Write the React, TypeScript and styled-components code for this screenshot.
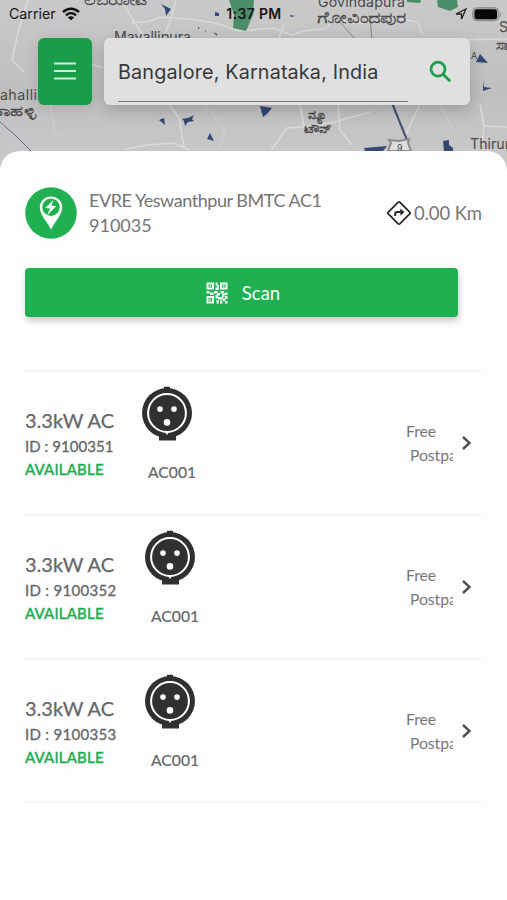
import React from "react";
import styled, { createGlobalStyle } from "styled-components";

const GlobalStyle = createGlobalStyle`
  * { box-sizing: border-box; }
  body { margin: 0; background: #fdfdfd; }
`;

const Screen = styled.main`
  position: relative;
  width: 507px;
  height: 900px;
  overflow: hidden;
  background: #c9c9c9;
  font-family: Lato, "Open Sans", sans-serif;
  color: #666;
`;

const MapCanvas = styled.svg`
  position: absolute;
  inset: 0 0 auto 0;
  display: block;
`;

const Header = styled.header`
  position: relative;
  height: 151px;
`;

const StatusBar = styled.div`
  display: grid;
  grid-template-columns: 1fr auto 1fr;
  align-items: center;
  height: 28px;
  padding: 0 5px 0 9px;
  font-family: Inter, sans-serif;
  font-size: 14.2px;
  line-height: 28px;
  color: #161616;
`;

const StatusGroup = styled.div<{ $end?: boolean }>`
  display: flex;
  align-items: center;
  justify-content: ${(p) => (p.$end ? "flex-end" : "flex-start")};
  gap: ${(p) => (p.$end ? "5px" : "6px")};
`;

const Clock = styled.span`
  margin-right: 3px;
  font-weight: 600;
  font-size: 14px;
  letter-spacing: 0.35px;
`;

const SearchRow = styled.div`
  display: flex;
  gap: 12px;
  padding: 10px 37px 0 38px;
`;

const MenuButton = styled.button`
  display: flex;
  align-items: center;
  justify-content: center;
  width: 54px;
  height: 67px;
  padding: 0;
  border: 0;
  border-radius: 6px;
  background: #189d49;
  box-shadow: 0 3px 14px rgba(0, 0, 0, 0.12);
`;

const SearchBox = styled.div`
  display: flex;
  flex: 1;
  height: 67px;
  padding: 0 18px 0 14px;
  border-radius: 6px;
  background: #e0e0e0;
  box-shadow: 0 5px 16px rgba(0, 0, 0, 0.2);
`;

const SearchField = styled.div`
  width: 290px;
  height: 64px;
  border-bottom: 1px solid #777;
  font-family: Inter, sans-serif;
  font-size: 19.8px;
  line-height: 69px;
  letter-spacing: 0.15px;
  color: #383838;
  white-space: nowrap;
`;

const SearchIcon = styled.svg`
  margin: 22px 0 0 auto;
`;

const Sheet = styled.section`
  position: relative;
  height: 749px;
  padding: 36px 25px 0;
  border-radius: 20px 20px 0 0;
  background: #fdfdfd;
`;

const Station = styled.div`
  display: flex;
  align-items: center;
  height: 52px;
`;

const StationText = styled.div`
  margin-left: 12px;
  font-size: 18px;
  line-height: 25px;
  letter-spacing: -0.45px;
  color: #757575;
  white-space: nowrap;
`;

const StationCode = styled.div`
  letter-spacing: 0;
`;

const Distance = styled.div`
  display: flex;
  align-items: center;
  gap: 2px;
  margin-left: auto;
  font-size: 18.5px;
  letter-spacing: -0.1px;
  white-space: nowrap;
  color: #777;
`;

const ScanButton = styled.button`
  display: flex;
  align-items: center;
  justify-content: center;
  gap: 14px;
  width: 433px;
  height: 49px;
  margin: 29px 0 53px;
  padding: 0 0 0 3px;
  border: 0;
  border-radius: 4px;
  background: #20b052;
  box-shadow: 1px 4px 6px rgba(0, 0, 0, 0.2);
  font-family: inherit;
  font-size: 18.5px;
  color: #f4fff7;
`;

const ConnectorList = styled.ul`
  margin: 0;
  padding: 0;
  list-style: none;
  border-top: 2px solid #f4f4f4;
`;

const Connector = styled.li`
  display: flex;
  height: 144px;
  border-bottom: 2px solid #f4f4f4;

  &:last-child {
    height: 143px;
    border-bottom-color: #f7f7f7;
  }
`;

const Details = styled.div<{ $wide?: boolean }>`
  width: ${(p) => (p.$wide ? 120 : 117)}px;
  padding-top: 34px;
  white-space: nowrap;
`;

const Power = styled.div`
  font-size: 20px;
  line-height: 28px;
  -webkit-text-stroke: 0.25px;
`;

const Identifier = styled.div<{ $wide?: boolean }>`
  font-size: 15px;
  line-height: 25px;
  letter-spacing: ${(p) => (p.$wide ? 0.3 : 0.05)}px;
  -webkit-text-stroke: 0.3px;
`;

const Availability = styled.div`
  font-size: 15px;
  line-height: 20px;
  letter-spacing: 0.2px;
  color: #16ac4b;
  -webkit-text-stroke: 0.4px;
`;

const Plug = styled.div`
  display: flex;
  flex-direction: column;
  width: 60px;
  padding-top: 14px;
`;

const PlugName = styled.div`
  margin: 20px 0 0 6px;
  font-size: 15.7px;
  line-height: 20px;
  -webkit-text-stroke: 0.2px;
`;

const Billing = styled.div`
  width: 47px;
  margin-left: auto;
  padding-top: 47px;
  overflow: hidden;
  font-size: 15.8px;
  line-height: 24px;
  letter-spacing: -0.1px;
  color: #777;
  white-space: nowrap;
`;

const Plan = styled.div`
  padding-left: 4px;
`;

const Chevron = styled.svg`
  margin: 61px 8px 0 7px;
`;

function CityMap() {
  return (
    <MapCanvas width="507" height="180" viewBox="0 0 507 180">
      <defs>
        <linearGradient id="land" x1="0" y1="0" x2="0" y2="1">
          <stop offset="0" stopColor="#c9c9c9" />
          <stop offset="0.5" stopColor="#bfbfbf" />
          <stop offset="1" stopColor="#cbcbcb" />
        </linearGradient>
      </defs>
      <rect width="507" height="180" fill="url(#land)" />
      <g fill="none" stroke="#d9d9d9" strokeWidth="1.6">
        <path d="M28 0 18 32 12 60 24 72M92 65 103 67M121 0 138 28 146 40" />
        <path d="M132 23 150 21 160 17 190 19 215 23 240 31 273 28 292 35 304 31 324 29 335 20 360 24 390 18 418 22 423 35" />
        <path d="M176 0 171 18 163 40M279 38 284 24M168 103 179 118 184 147M125 149 148 145 173 143 190 150M300 104 304 127 335 122 370 112M338 104 340 130 352 145M420 104 404 138M271 150 287 128 303 127M453 40 507 39M480 104 484 126 507 127M484 126 482 145" />
      </g>
      <g fill="none" stroke="#d0d0d0">
        <path d="M50 105 55 130 70 150M205 105 225 130 218 150M440 105 452 128" />
      </g>
      <g fill="none" stroke="#67708a">
        <path d="m0 122 15 13 17 17" />
        <path d="m338 20 18 20M370 17 372 40" stroke="#858995" />
        <path d="m392 103 15 37" stroke="#42506f" strokeWidth="2" />
      </g>
      <path d="M229 0H254L253 15 246 31 233 28 234 15Z" fill="#4c8d69" />
      <path d="M407 0H421L420 3 407 2ZM437 0H457L458 7 450 11 438 7Z" fill="#4c8d69" />
      <g fill="#344875">
        <path d="m161 4 10 5-5 7-1-7ZM215 12l4 1v3h-4ZM213 32l4 2v2ZM159 120l5-2 1 7ZM182 119l6-1 6-3-2 4 2 2-6 1-3 4-1-5ZM207 139l3-6 4 8ZM260 106l12 2-5 6-4 3ZM476 62l4-8 8 9ZM483 81l1 6 8 1-9 3ZM364 148l23-2-4 5h-18ZM443 141l6-1v5l4 3v3h-9Z" />
        <path d="m198 27 2 1-2 1ZM205 30l1 1-1 1ZM290 15l5 1-4 1Z" />
      </g>
      <path d="M388 151 391 143 389 140 399 141 409 139 408 143 411 151Z" fill="#ddd" stroke="#8b8b8b" strokeWidth="2" />
      <g fontFamily='Inter, "Open Sans", sans-serif' fontSize="14.2" fill="#4a4a4a">
        <text x="84" y="5" textLength="64" lengthAdjust="spacingAndGlyphs" stroke="#4a4a4a" strokeWidth=".3">ಲಿಬರೋಟೆ</text>
        <text x="114" y="42" textLength="77">Mavallipura</text>
        <text x="318" y="7" textLength="87">Govindapura</text>
        <text x="317" y="23" fontSize="15.5" textLength="89" lengthAdjust="spacingAndGlyphs" stroke="#4a4a4a" strokeWidth=".3">ಗೋವಿಂದಪುರ</text>
        <text x="-9" y="100" textLength="46">nahalli</text>
        <text x="-10" y="116" textLength="46" lengthAdjust="spacingAndGlyphs" stroke="#4a4a4a" strokeWidth=".3">ಣಾಹಳ್ಳಿ</text>
        <text x="499" y="32">S</text>
        <text x="496" y="50" fontSize="15" stroke="#4a4a4a" strokeWidth=".3">ಸಾ</text>
        <text x="471" y="59" fontSize="9">A</text>
        <text x="470" y="149">Thirumala</text>
        <g fontSize="12" fontWeight="700">
          <text x="308" y="119" textLength="20" lengthAdjust="spacingAndGlyphs">ನ್ಯೂ</text>
          <text x="304" y="133" textLength="28" lengthAdjust="spacingAndGlyphs">ಟೌನ್</text>
        </g>
        <text x="397" y="151" fontSize="9">9</text>
      </g>
    </MapCanvas>
  );
}

function WifiGlyph() {
  return (
    <svg width="18" height="14" viewBox="0 0 18 14" fill="none" stroke="#101010" strokeWidth="2.5">
      <path d="M1 5.1C5.7.6 12.3.6 17 5.1M4 8.3c3-2.8 7-2.8 10 0" />
      <path d="M9 13.3 5.9 10.4c1.8-1.7 4.4-1.7 6.2 0Z" fill="#101010" stroke="none" />
    </svg>
  );
}

function StationBadge() {
  return (
    <svg width="52" height="52" viewBox="0 0 52 52">
      <circle cx="26" cy="26" r="25.8" fill="#20b052" />
      <path d="M26 42.5C21.5 33.5 14.8 28 14.8 20.2a11.2 10.8 0 0 1 22.4 0C37.2 28 30.5 33.5 26 42.5Z" fill="#f8fff9" />
      <circle cx="26" cy="20.2" r="8.7" fill="#20b052" />
      <path d="m28.5 12.7-8.2 8.2 4.8.7-3 6.7 9-9-4.8-.8Z" fill="#f8fff9" />
    </svg>
  );
}

function DirectionsGlyph() {
  return (
    <svg width="26" height="26" viewBox="0 0 26 26" fill="none" stroke="#292929" strokeWidth="1.8">
      <path d="m12 2.3-9.7 9.8q-1 .9 0 1.8l9.7 9.8q1 .9 2 0l9.7-9.8q1-.9 0-1.8L14 2.3q-1-.9-2 0Z" />
      <path d="M9.2 16v-2.1q0-1.8 1.8-1.8h4.5" strokeWidth="2" />
      <path d="m14.4 8.4 4.1 3.7-4.1 3.7Z" fill="#292929" stroke="none" />
    </svg>
  );
}

function QrGlyph() {
  return (
    <svg width="22" height="22" viewBox="0 0 22 22" fill="#f4fff7">
      <path fillRule="evenodd" d="M.5.5H8v7H.5Zm2 2v3H6v-3ZM14 .5h7.5v7H14Zm2 2v3h3.5v-3ZM.5 14H8v7.5H.5Zm2 2v3.5H6V16Z" />
      <path d="M3.5 3.3H5v1.4H3.5ZM17 3.3h1.4v1.4H17ZM3.5 17H5v1.4H3.5ZM9.5.5h2v3h-2ZM11 3h2v5h-3.5V5.5H11ZM.5 9h3v2.5h-3ZM4 10.5h3.5V13H4ZM8 9h3.5v2.5H8ZM11 11h3v2.5h-3ZM14.5 9H18v2.5h-3.5ZM18.5 10.5h3V13h-3ZM9.5 13H12v3.5H9.5ZM12 15h5v2.5h-5ZM16 12h2.5v3H16ZM19 14h2.5v3H19ZM10.5 18h2.3v3.5h-2.3ZM14 18.5h2.5v3H14ZM17 16.5h2.3V19H17ZM19 19h2.5v2.5H19Z" />
    </svg>
  );
}

function SocketIcon() {
  return (
    <svg width="50" height="56" viewBox="0 0 50 56">
      <path d="M22 4V.8h6V4ZM17 48h17v6.5H17Z" fill="#303030" />
      <circle cx="25" cy="27" r="25" fill="#303030" />
      <circle cx="25" cy="27" r="18.9" fill="#303030" stroke="#fff" strokeWidth="2" />
      <path d="m22.3 45 2.7 4 2.7-4Z" fill="#fff" />
      <g fill="#fff">
        <circle cx="18" cy="23.1" r="2.8" />
        <circle cx="32" cy="23.1" r="2.8" />
        <circle cx="25" cy="36.4" r="3.3" />
      </g>
    </svg>
  );
}

const connectors = [
  { id: "9100351", wide: false },
  { id: "9100352", wide: true },
  { id: "9100353", wide: true },
];

export default function App() {
  return (
    <Screen>
      <GlobalStyle />
      <CityMap />
      <Header>
        <StatusBar>
          <StatusGroup>
            <span>Carrier</span>
            <WifiGlyph />
          </StatusGroup>
          <Clock>1:37 PM</Clock>
          <StatusGroup $end>
            <svg width="12" height="12" viewBox="0 0 12 12" fill="none" stroke="#222" strokeWidth="1.3">
              <path d="M1 6 11 1 6.5 11V6Z" />
            </svg>
            <svg width="30" height="15" viewBox="0 0 30 15">
              <rect x=".7" y=".7" width="26" height="13" rx="4" fill="#aaa" stroke="#888" />
              <rect x="2.5" y="2.3" width="22.5" height="10" rx="2.5" fill="#080808" />
              <path d="M28 5q2 2.5 0 5Z" fill="#888" />
            </svg>
          </StatusGroup>
        </StatusBar>
        <SearchRow>
          <MenuButton aria-label="Menu">
            <svg width="24" height="20" viewBox="0 0 24 20" stroke="#d5edde" strokeWidth="2">
              <path d="M1 1.5h22M1 9h22M1 16.5h22" />
            </svg>
          </MenuButton>
          <SearchBox>
            <SearchField>Bangalore, Karnataka, India</SearchField>
            <SearchIcon width="24" height="24" viewBox="0 0 24 24" fill="none" stroke="#189f49" strokeWidth="2.7">
              <circle cx="10" cy="9.2" r="7" />
              <path d="m15 14.3 7.2 7" />
            </SearchIcon>
          </SearchBox>
        </SearchRow>
      </Header>
      <Sheet>
        <Station>
          <StationBadge />
          <StationText>
            EVRE Yeswanthpur BMTC AC1
            <StationCode>910035</StationCode>
          </StationText>
          <Distance>
            <DirectionsGlyph />
            <span>0.00 Km</span>
          </Distance>
        </Station>
        <ScanButton>
          <QrGlyph />
          Scan
        </ScanButton>
        <ConnectorList>
          {connectors.map((c) => (
            <Connector key={c.id}>
              <Details $wide={c.wide}>
                <Power>3.3kW AC</Power>
                <Identifier $wide={c.wide}>ID : {c.id}</Identifier>
                <Availability>AVAILABLE</Availability>
              </Details>
              <Plug>
                <SocketIcon />
                <PlugName>AC001</PlugName>
              </Plug>
              <Billing>
                <div>Free</div>
                <Plan>Postpaid</Plan>
              </Billing>
              <Chevron width="14" height="20" viewBox="0 0 14 20" fill="none" stroke="#505050" strokeWidth="2.4">
                <path d="m3 4 6.5 6L3 16" />
              </Chevron>
            </Connector>
          ))}
        </ConnectorList>
      </Sheet>
    </Screen>
  );
}
